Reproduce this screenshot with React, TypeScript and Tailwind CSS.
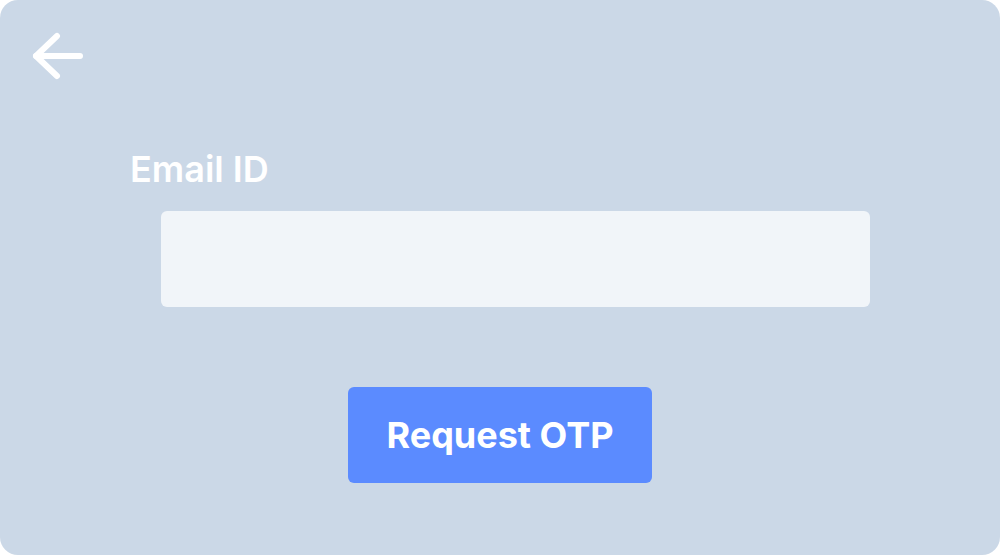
export default function App() {
  return (
    <div className="w-[1000px] h-[555px] bg-white font-['Inter',sans-serif]">
      <div className="w-full h-full bg-[#cbd8e7] rounded-[18px] flex flex-col">
        <div className="pl-[32px] pt-[32px]">
          <svg width="52" height="48" viewBox="32 32 52 48" fill="none" stroke="#ffffff" strokeWidth={6} strokeLinecap="round" strokeLinejoin="round">
            <path d="M57 36 L36 56 L57 76" />
            <path d="M36 56 H80" />
          </svg>
        </div>
        <label className="ml-[130px] mt-[71px] text-white text-[36px] font-semibold leading-none">Email ID</label>
        <input className="ml-[161px] mt-[24px] w-[709px] h-[96px] bg-[#f1f5f9] rounded-[6px] outline-none" />
        <div className="flex justify-center mt-[80px]">
          <button className="w-[304px] h-[96px] bg-[#5b8bff] rounded-[6px] text-white text-[36px] font-bold">
            Request OTP
          </button>
        </div>
      </div>
    </div>
  );
}
